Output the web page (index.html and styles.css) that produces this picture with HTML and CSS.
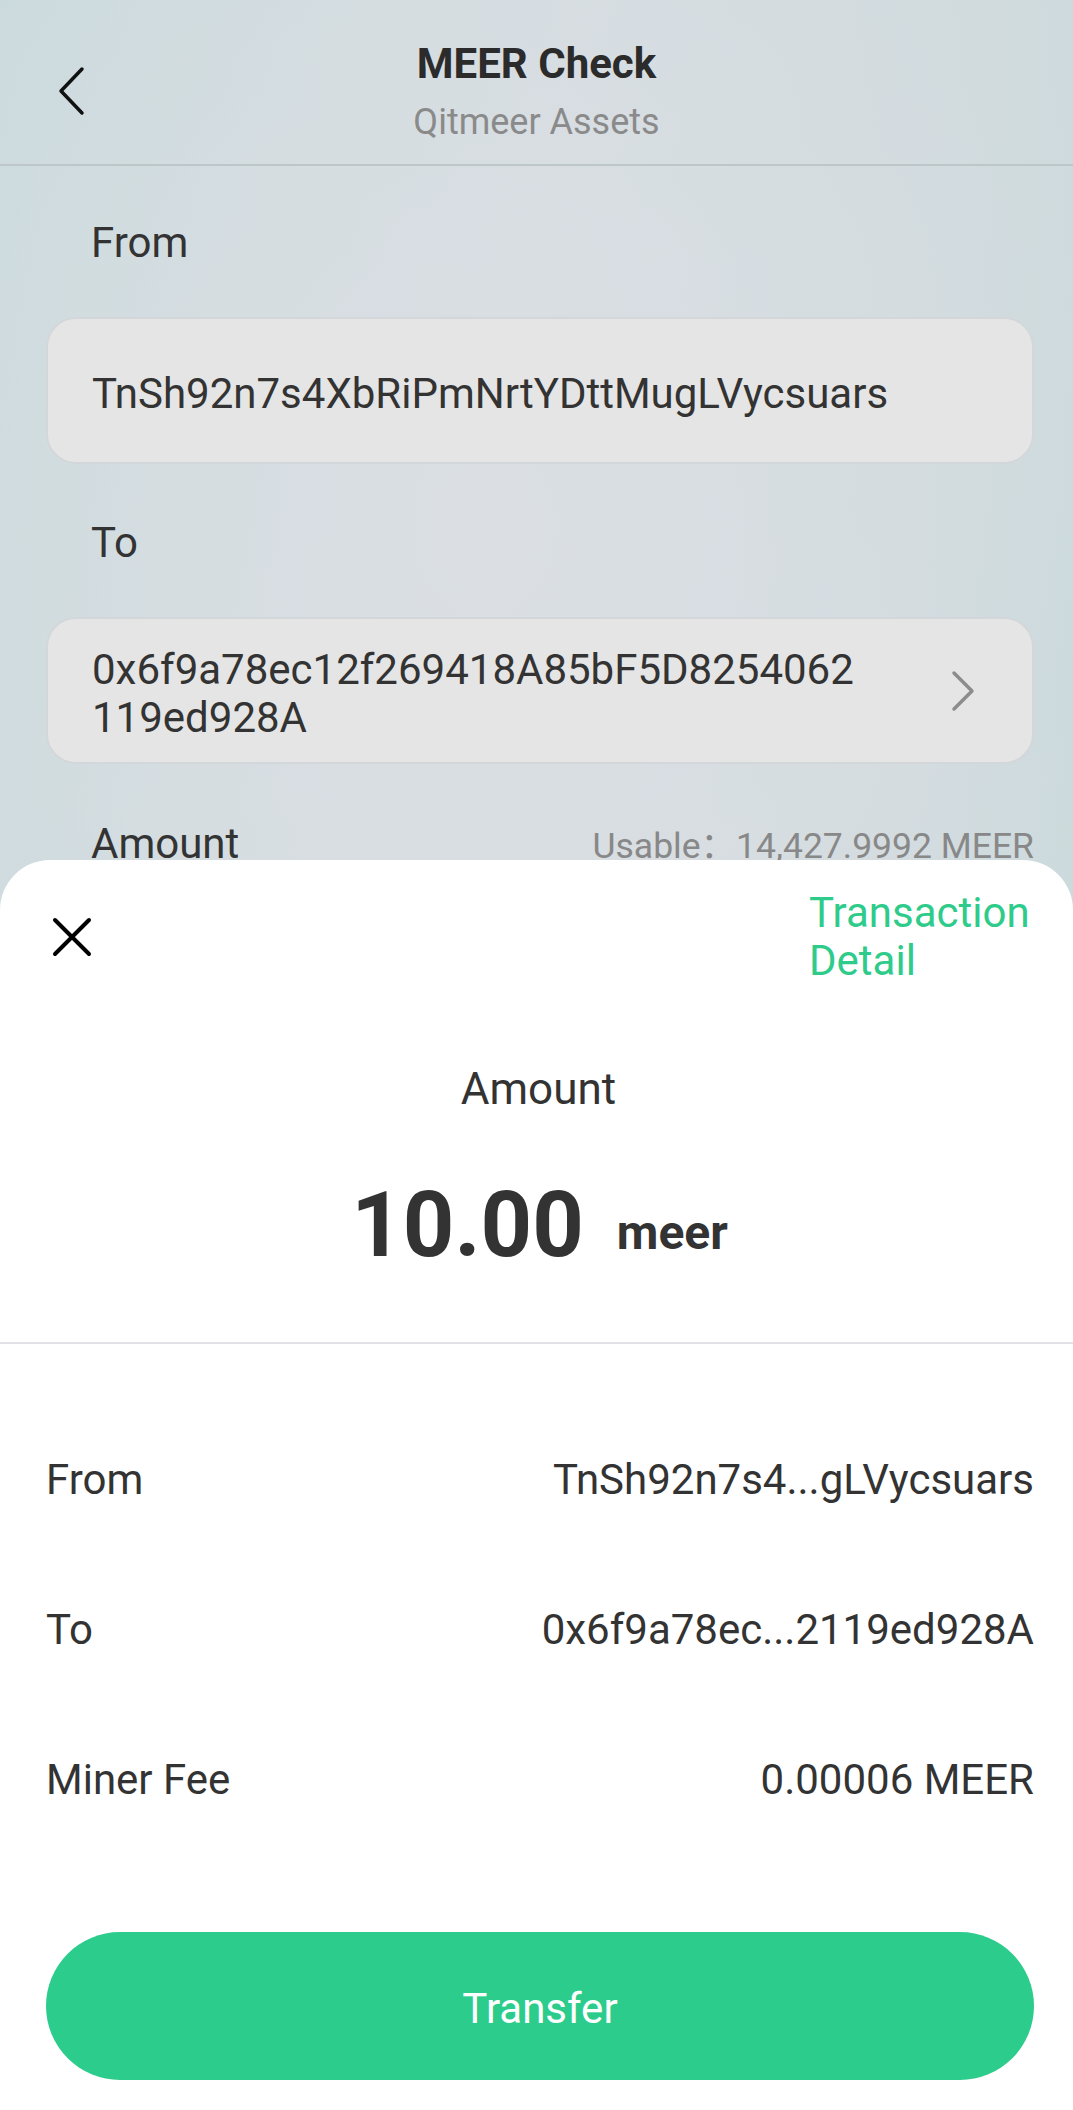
FILE: index.html
```html
<!DOCTYPE html>
<html lang="en">
<head>
<meta charset="utf-8">
<title>MEER Check</title>
<link rel="stylesheet" href="styles.css">
</head>
<body>
<div class="page">
  <header class="topbar">
    <button class="back" aria-label="Back">
      <svg width="30" height="50" viewBox="0 0 30 50"><polyline points="25,3 4,25 25,47" fill="none" stroke="#111" stroke-width="3.5" stroke-linecap="round" stroke-linejoin="round"/></svg>
    </button>
    <div class="titles">
      <div class="title">MEER Check</div>
      <div class="subtitle">Qitmeer Assets</div>
    </div>
  </header>

  <main class="form">
    <div class="label">From</div>
    <div class="field">
      <div class="field-text">TnSh92n7s4XbRiPmNrtYDttMugLVycsuars</div>
    </div>

    <div class="label gap">To</div>
    <div class="field">
      <div class="field-text addr">0x6f9a78ec12f269418A85bF5D8254062119ed928A</div>
      <svg class="chev" width="24" height="42" viewBox="0 0 24 42"><polyline points="3,3 21,21 3,39" fill="none" stroke="#8c8c8c" stroke-width="3.5" stroke-linecap="round" stroke-linejoin="round"/></svg>
    </div>

    <div class="label-row gap">
      <span class="label">Amount</span>
      <span class="usable">Usable：14,427.9992 MEER</span>
    </div>
  </main>

  <section class="sheet">
    <div class="sheet-head">
      <button class="close" aria-label="Close">
        <svg width="40" height="40" viewBox="0 0 40 40"><path d="M3 3 L37 37 M37 3 L3 37" fill="none" stroke="#000" stroke-width="4" stroke-linecap="round"/></svg>
      </button>
      <a class="detail-link">Transaction Detail</a>
    </div>

    <div class="amount-label">Amount</div>
    <div class="amount"><span class="amount-num">10.00</span><span class="amount-unit">meer</span></div>

    <div class="divider"></div>

    <div class="rows">
      <div class="row"><span>From</span><span>TnSh92n7s4...gLVycsuars</span></div>
      <div class="row"><span>To</span><span>0x6f9a78ec...2119ed928A</span></div>
      <div class="row"><span>Miner Fee</span><span>0.00006 MEER</span></div>
    </div>

    <button class="transfer">Transfer</button>
  </section>
</div>
</body>
</html>
```

FILE: styles.css
```css
* { box-sizing: border-box; }
html, body { margin: 0; padding: 0; }
body {
  font-family: Roboto, "Noto Sans CJK SC", "Liberation Sans", sans-serif;
  color: #333;
}
.page {
  position: relative;
  width: 1073px;
  height: 2110px;
  overflow: hidden;
  background:
    radial-gradient(ellipse 70% 45% at 45% 25%, rgba(219,223,228,0.9) 0%, rgba(219,223,228,0) 100%),
    radial-gradient(ellipse 60% 40% at 55% 60%, rgba(216,221,226,0.8) 0%, rgba(216,221,226,0) 100%),
    linear-gradient(100deg, #c9dadc 0%, #d4dce0 40%, #cfdadd 70%, #c2d8d9 100%);
}
button { font-family: inherit; border: 0; background: none; padding: 0; cursor: pointer; }

.topbar {
  position: relative;
  height: 166px;
  border-bottom: 2px solid #bdc6c9;
  display: flex;
  align-items: flex-start;
}
.back {
  position: absolute;
  left: 57px;
  top: 66px;
  width: 30px;
  height: 50px;
}
.titles {
  flex: 1;
  text-align: center;
  padding-top: 39px;
}
.title {
  font-size: 42px;
  font-weight: 700;
  line-height: 50px;
  color: #2b2b2b;
}
.subtitle {
  margin-top: 11px;
  font-size: 36px;
  line-height: 44px;
  color: #8a8a8a;
}

.form {
  padding: 53px 39px 0 46px;
}
.label {
  font-size: 42px;
  line-height: 48px;
  padding-left: 45px;
  color: #333;
}
.label.gap { margin-top: 55px; }
.field {
  margin-top: 50px;
  height: 147px;
  background: #e5e5e5;
  border: 2px solid #d3d7da;
  border-radius: 30px;
  display: flex;
  align-items: center;
  padding: 6px 57px 0 44px;
}
.field-text {
  font-size: 42px;
  line-height: 48px;
  color: #333;
}
.field-text.addr {
  width: 784px;
  word-break: break-all;
}
.chev { margin-left: auto; margin-top: -6px; }

.label-row {
  display: flex;
  justify-content: space-between;
  align-items: baseline;
}
.label-row.gap { margin-top: 53px; }
.usable {
  font-size: 35.5px;
  color: #888;
}

.sheet {
  position: absolute;
  left: 0;
  right: 0;
  top: 860px;
  bottom: 0;
  background: #fff;
  border-radius: 50px 50px 0 0;
  display: flex;
  flex-direction: column;
}
.sheet-head {
  display: flex;
  align-items: center;
  justify-content: space-between;
  padding: 29px 34px 0 52px;
}
.close { width: 40px; height: 40px; }
.close svg { display: block; }
.detail-link {
  width: 230px;
  font-size: 42px;
  line-height: 48px;
  color: #2ecb8b;
}
.amount-label {
  margin-top: 80px;
  text-align: center;
  font-size: 44px;
  line-height: 48px;
  color: #333;
  padding-left: 4px;
}
.amount {
  margin-top: 58px;
  height: 110px;
  line-height: 110px;
  text-align: center;
  padding-left: 6px;
}
.amount-num {
  font-size: 90px;
  font-weight: 700;
  color: #333;
}
.amount-unit {
  display: inline-block;
  margin-left: 33px;
  font-size: 48px;
  font-weight: 700;
  color: #333;
  vertical-align: 7px;
  line-height: 54px;
}
.divider {
  margin-top: 61px;
  height: 2px;
  background: #e2e2e6;
}
.rows {
  padding: 112px 39px 0 46px;
  display: flex;
  flex-direction: column;
  gap: 102px;
}
.row {
  display: flex;
  justify-content: space-between;
  font-size: 42px;
  line-height: 48px;
  color: #333;
}
.transfer {
  margin: 128px 39px 0 46px;
  height: 148px;
  border-radius: 74px;
  background: #2ccc8c;
  color: #fff;
  font-size: 42px;
  padding-top: 4px;
}
```
